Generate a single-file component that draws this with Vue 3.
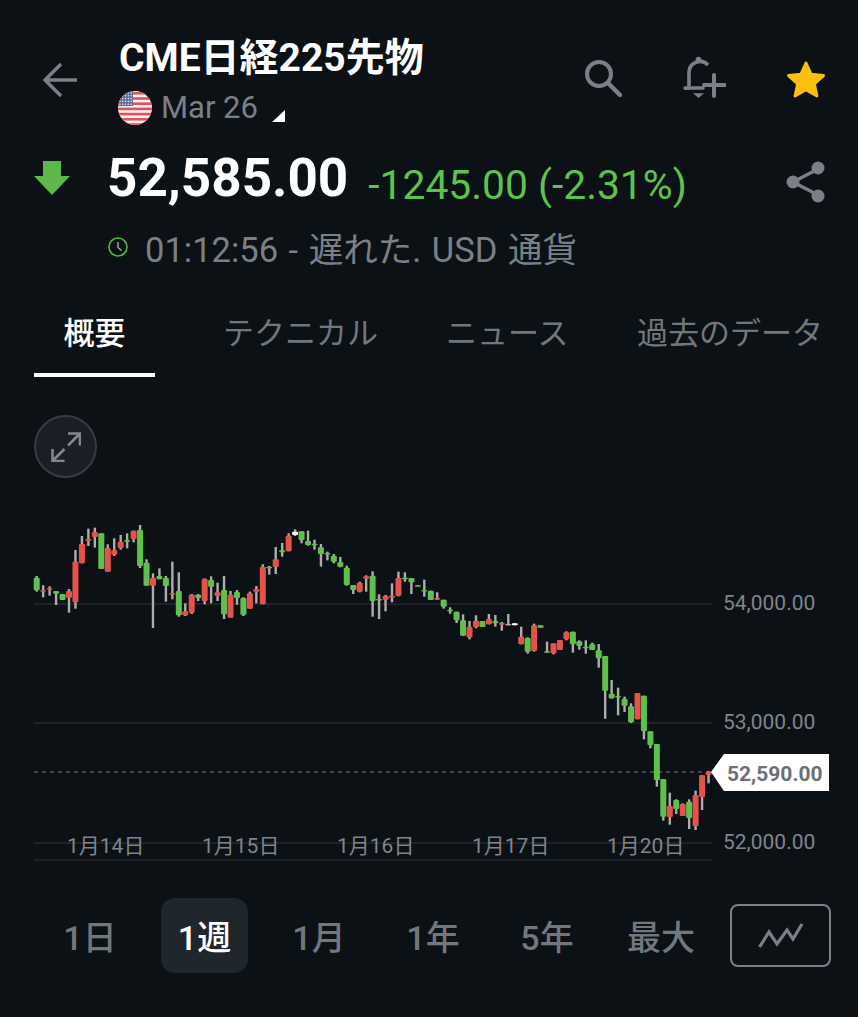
<template>
  <div class="page">
    <header class="top">
      <button class="back" aria-label="back">
        <svg width="36" height="36" viewBox="0 0 36 36" fill="none" stroke="#7b8087" stroke-width="3.4">
          <path d="M35 18H3M19 2 3 18l16 16" />
        </svg>
      </button>
      <div class="title-block">
        <h1>CME日経225先物</h1>
        <div class="contract">
          <svg class="flag" width="34" height="34" viewBox="0 0 34 34">
            <defs>
              <clipPath id="flagclip"><circle cx="17" cy="17" r="17" /></clipPath>
            </defs>
            <g clip-path="url(#flagclip)">
              <rect width="34" height="34" fill="#f4f1f1" />
              <rect v-for="y in stripes" :key="y" x="0" :y="y" width="34" height="2.6" fill="#e0525c" />
              <rect width="15" height="15" fill="#5b6a92" />
              <circle v-for="s in stars" :key="s[0] + '-' + s[1]" :cx="s[0]" :cy="s[1]" r="0.8" fill="#e8e8ee" />
            </g>
          </svg>
          <span>Mar 26</span>
          <i class="corner"></i>
        </div>
      </div>
      <div class="actions">
        <svg width="38" height="38" viewBox="0 0 38 38" fill="none" stroke="#7b8087">
          <circle cx="15" cy="15" r="12" stroke-width="4" />
          <path d="m24 24 12 12" stroke-width="4.4" stroke-linecap="round" />
        </svg>
        <svg width="44" height="44" viewBox="0 0 44 44" fill="none" stroke="#7b8087">
          <path d="M7 31V17a11 11 0 0 1 19-7" stroke-width="3.6" />
          <path d="M3 33h18" stroke-width="3.6" stroke-linecap="round" />
          <path d="M2 35 7 29v6z" fill="#7b8087" stroke="none" />
          <circle cx="16.500" cy="4.500" r="2.800" fill="#7b8087" stroke="none" />
          <path d="M13 39h7l-3.500 3z" fill="#7b8087" stroke="#7b8087" stroke-width="1.500" />
          <path d="M32 20v21M22 30h21" stroke-width="4" stroke-linecap="round" />
        </svg>
        <svg width="40" height="38" viewBox="0 0 40 38">
          <path d="M20 3 25 14.200l12.500 1.400-9.200 8.300 2.600 12-10.900-6.200-10.900 6.200 2.600-12-9.200-8.300L15 14.200z" fill="#fbbf0e" stroke="#fbbf0e" stroke-width="3" stroke-linejoin="round" />
        </svg>
      </div>
    </header>

    <section class="price-row">
      <svg class="down" width="36" height="34" viewBox="0 0 36 34">
        <path d="M9 0h18v15h9L18 34 0 15h9z" fill="#5cb947" />
      </svg>
      <div class="last">52,585.00</div>
      <div class="change">-1245.00 (-2.31%)</div>
      <svg class="share" width="40" height="42" viewBox="0 0 40 42" fill="#7b8087" stroke="#7b8087">
        <path d="M32 8 7 21l25 13" fill="none" stroke-width="3.400" />
        <circle cx="32" cy="7" r="6.500" stroke="none" />
        <circle cx="7" cy="21" r="6.500" stroke="none" />
        <circle cx="32" cy="35" r="6.500" stroke="none" />
      </svg>
    </section>

    <div class="meta">
      <svg width="20" height="20" viewBox="0 0 20 20" fill="none" stroke="#4fbb45">
        <circle cx="10" cy="10" r="9" stroke-width="1.600" />
        <path d="M10 5v5.500l3.500 3" stroke="#a8b0a8" stroke-width="1.400" />
      </svg>
      <span>01:12:56 - 遅れた. USD 通貨</span>
    </div>

    <nav class="tabs">
      <a v-for="t in tabs" :key="t.label" class="tab" :class="{ active: t.active }" :style="{ width: t.width + 'px' }">{{ t.label }}</a>
    </nav>

    <button class="expand" aria-label="expand">
      <svg width="30" height="30" viewBox="0 0 30 30" fill="none" stroke="#84878c" stroke-width="2.600">
        <path d="M17 1.500h12v12M29 1.500 17 13.500M1.500 17v12h12M1.500 29l12-12" />
      </svg>
    </button>

    <svg class="chart" width="858" height="390" viewBox="0 490 858 390">
      <line v-for="y in gridY" :key="y" x1="34" x2="712" :y1="y" :y2="y" stroke="#25292e" stroke-width="1.500" />
      <line x1="34" x2="712" y1="772" y2="772" stroke="#53575b" stroke-width="1.300" stroke-dasharray="4 4" />
      <g v-for="c in candles" :key="c.x">
        <rect :x="c.x - 1.200" :y="c.wickTop" width="2.400" :height="c.wickH" fill="#adadad" />
        <rect :x="c.x - 3" :y="c.bodyTop" width="6" :height="c.bodyH" rx="1" :fill="c.fill" />
      </g>
      <text v-for="d in dates" :key="d.label" :x="d.x" y="853" class="date">{{ d.label }}</text>
      <text v-for="p in axis" :key="p.label" x="723" :y="p.y" class="axis">{{ p.label }}</text>
      <path d="M711 772 724 754H829V791H724z" fill="#fff" />
      <text x="727" y="781" class="tag">52,590.00</text>
    </svg>

    <div class="ranges">
      <button v-for="r in ranges" :key="r.label" class="range" :class="{ active: r.active }">{{ r.label }}</button>
      <button class="type" aria-label="chart type">
        <svg width="46" height="28" viewBox="0 0 46 28" fill="none" stroke="#7b8087" stroke-width="3.200">
          <path d="M1.500 25 11 10l8 12 10-14 6 9 9-15" />
        </svg>
      </button>
    </div>
  </div>
</template>

<script setup>
const tabs = [
  { label: '概要', width: 121, active: true },
  { label: 'テクニカル', width: 223 },
  { label: 'ニュース', width: 259 },
  { label: '過去のデータ', width: 187 }
];

const ranges = [
  { label: '1日' },
  { label: '1週', active: true },
  { label: '1月' },
  { label: '1年' },
  { label: '5年' },
  { label: '最大' }
];

const stripes = [1, 6.200, 11.400, 16.600, 21.800, 27, 32.200];
const stars = [];
for (let r = 0; r < 5; r++) {
  for (let k = 0; k < 5; k++) stars.push([2 + k * 2.800, 2 + r * 2.800]);
}

const gridY = [604, 723, 843, 860];
const dates = [
  { label: '1月14日', x: 67 },
  { label: '1月15日', x: 202 },
  { label: '1月16日', x: 337 },
  { label: '1月17日', x: 472 },
  { label: '1月20日', x: 607 }
];
const axis = [
  { label: '54,000.00', y: 610 },
  { label: '53,000.00', y: 729 },
  { label: '52,000.00', y: 849 }
];

// 値はスクショの3倍ズームから読んだ座標: [色, 髭上, 髭下, 実体上, 実体下]
const upper = [
  ['g',198,245,203,241],['r',226,262,241,244],['r',229,257,235,239],['g',243,285,243,251],['g',252,270,252,270],
  ['r',237,308,243,263],['r',120,296,155,277],['r',78,160,102,160],['r',56,108,87,93],['r',53,113,66,81],
  ['g',70,177,70,177],['r',103,185,114,185],['r',85,138,120,134],['r',75,119,95,114],['g',70,115,90,95],
  ['r',62,97,62,87],['g',45,174,60,168],['g',148,227,158,227],['r',190,354,204,227],['g',175,208,198,208],
  ['g',198,275,204,228],['r',155,268,250,254],['g',187,320,243,316],['r',280,318,304,316],['r',252,312,254,308],
  ['g',252,273,254,264],['r',205,283,207,273],['g',199,280,210,230],['r',218,273,247,258],['g',198,327,240,313],
  ['r',243,323,254,323],['g',240,284,246,264],['g',262,318,264,314],['r',245,296,250,296],['r',228,280,237,245],
  ['r',163,283,170,283],['g',168,194,170,174],['r',111,192,148,171],['g',99,140,121,127],['r',70,124,77,124],
  ['w',58,78,65,75],['g',64,100,64,90],['g',62,107,93,105],['g',89,119,101,105],['g',102,170,112,132],
  ['g',125,151,129,132],['g',132,160,138,155],['g',141,172,157,170],['g',167,227,173,225],['g',225,252,225,240],
  ['r',215,247,218,245],['r',196,245,199,206],['g',184,320,197,273],['g',253,327,267,271],['r',255,304,258,269],
  ['r',220,277,257,263],['r',185,259,204,257],['g',187,215,203,205],['g',204,252,204,217],['g',226,228,226,228],
  ['g',209,260,240,242],['g',242,270,242,270],['r',247,270,264,269],['g',269,296,269,290],['g',292,311,299,304],
  ['g',305,339,305,331],['g',313,378,331,377],['r',333,388,350,382],['r',316,355,332,351],['g',333,351,333,351]
];
const middle = [
  ['r',42,73,57,73],['g',45,80,63,70],['r',66,92,69,74],['x',42,75,72,74],['w',70,76,70,76],
  ['r',80,133,110,133],['g',112,161,114,155],['r',71,155,76,153],['g',76,83,76,83],['g',125,158,154,157],
  ['r',130,163,130,160],['r',120,150,120,150],['r',94,121,97,118],['g',95,158,95,133],['g',121,149,124,138],
  ['g',121,161,140,145],['g',128,150,133,150],['g',132,203,151,175],['g',168,356,168,272],['g',240,296,281,295],
  ['g',263,346,288,290],['g',290,336,297,317],['g',310,369,319,367],['r',279,358,279,358]
];
const lower = [
  ['g',-73,58,-73,34],['g',34,85,34,75],['g',72,200,72,180],['g',177,302,177,290],['r',218,314,258,291],
  ['g',238,282,240,267],['r',250,288,252,288],['g',238,327,245,294],['r',212,330,225,318],['r',165,270,165,231],
  ['r',153,190,155,165]
];

const fills = { g: '#5fc04b', r: '#e5524b', w: '#ffffff', x: '#adadad' };

function toCandle(row, off) {
  const [c, wt, wb, bt, bb] = row;
  return { c, wickTop: off + wt / 3, wickH: (wb - wt) / 3, bodyTop: off + bt / 3, bodyH: Math.max((bb - bt) / 3, 1.500), fill: fills[c] };
}

const candles = [
  ...upper.map(r => toCandle(r, 510)),
  ...middle.map(r => toCandle(r, 600)),
  ...lower.map(r => toCandle(r, 720))
].map((c, i) => ({ ...c, x: 36.700 + i * 6.460 }));
</script>

<style>
html, body { background: #0c1116; }
</style>

<style scoped>
.page {
  width: 858px;
  height: 1017px;
  overflow: hidden;
  background: #0c1116;
  color: #fff;
  font-family: Roboto, "Noto Sans CJK JP", sans-serif;
}
button {
  background: none;
  border: none;
  padding: 0;
  font: inherit;
}
.top {
  display: flex;
  height: 138px;
  padding: 34px 32px 0 42px;
  box-sizing: border-box;
}
.back {
  width: 36px;
  height: 36px;
  margin-top: 28px;
}
.title-block {
  margin-left: 40px;
}
h1 {
  margin: 0 0 0 1px;
  font-size: 39px;
  line-height: 48px;
  font-weight: 700;
}
.contract {
  display: flex;
  align-items: center;
  margin-top: 9px;
  color: #7b8087;
  font-size: 31px;
  line-height: 34px;
}
.contract span {
  margin-left: 9px;
}
.corner {
  width: 0;
  height: 0;
  margin: 16px 0 0 14px;
  border-left: 13px solid transparent;
  border-bottom: 12px solid #fff;
}
.actions {
  margin-left: auto;
  display: flex;
  align-items: flex-start;
  gap: 62px;
  margin-top: 25px;
}
.actions svg:nth-child(2) {
  margin: -4px 0 0 -2px;
}
.actions svg:nth-child(3) {
  margin: 1px 0 0 -2px;
}
.price-row {
  display: flex;
  align-items: center;
  height: 80px;
  padding: 0 32px 0 34px;
}
.last {
  margin-left: 37px;
  font-size: 53px;
  font-weight: 700;
}
.change {
  margin: 14px 0 0 20px;
  color: #5ec24e;
  font-size: 40.800px;
}
.share {
  margin: 8px 0 0 auto;
}
.meta {
  display: flex;
  align-items: center;
  height: 40px;
  margin-top: 9px;
  padding-left: 108px;
  color: #7b8087;
  font-size: 34.500px;
  word-spacing: 2px;
}
.meta span {
  margin-left: 17px;
}
.tabs {
  display: flex;
  height: 84px;
  margin: 26px 0 0 34px;
}
.tab {
  box-sizing: border-box;
  height: 84px;
  padding-top: 18px;
  color: #72777d;
  font-size: 31px;
  line-height: 45px;
  text-align: center;
  white-space: nowrap;
}
.tab.active {
  color: #fff;
  font-weight: 500;
  border-bottom: 4px solid #fff;
}
.tab:nth-child(2) {
  text-align: left;
  padding-left: 68px;
}
.tab:nth-child(3) {
  text-align: left;
  padding-left: 68px;
}
.tab:nth-child(4) {
  text-align: left;
}
.expand {
  display: flex;
  align-items: center;
  justify-content: center;
  box-sizing: border-box;
  width: 63px;
  height: 63px;
  margin: 38px 0 0 34px;
  border: 2px solid #383c42;
  border-radius: 50%;
  background: #1a1f26;
}
.chart {
  display: block;
  margin-top: 12px;
}
.date {
  fill: #80858b;
  font-size: 21px;
}
.axis {
  fill: #80858b;
  font-size: 21px;
}
.tag {
  fill: #6b6f75;
  font-size: 21px;
  font-weight: 700;
}
.ranges {
  display: flex;
  align-items: center;
  height: 75px;
  margin-top: 18px;
  padding-left: 33px;
}
.range {
  width: 114px;
  height: 75px;
  color: #72777d;
  font-size: 34px;
  font-weight: 500;
  border-radius: 14px;
}
.range.active {
  width: 87px;
  margin: 0 14px;
  color: #fff;
  background: #1f262c;
}
.type {
  display: flex;
  align-items: center;
  justify-content: center;
  box-sizing: border-box;
  width: 101px;
  height: 63px;
  margin-left: 12px;
  border: 2px solid #7b8087;
  border-radius: 8px;
}
</style>
